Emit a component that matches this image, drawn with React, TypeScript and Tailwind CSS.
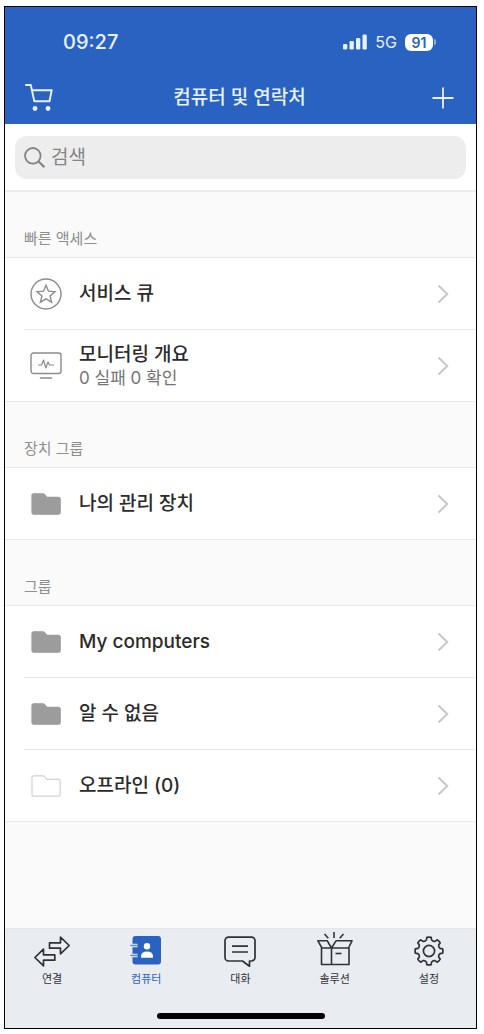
import type { ReactNode } from "react"
import clsx from "clsx"

type Row = {
    title: string
    subtitle?: string
    icon: ReactNode
}

type Section = {
    label: string
    rows: Row[]
}

type Tab = {
    label: string
    icon: ReactNode
    active?: boolean
}

function CartIcon() {
    return (
        <svg width="28" height="28" viewBox="0 0 28 28" fill="none" stroke="currentColor" strokeWidth="1.9" strokeLinecap="round" strokeLinejoin="round" aria-hidden="true">
            <path d="M1 1h4.800L9.300 17.300h15.200L26.700 6.300H6.900" />
            <circle cx="10" cy="24.500" r="2.400" fill="currentColor" stroke="none" />
            <circle cx="23" cy="24.500" r="2.400" fill="currentColor" stroke="none" />
        </svg>
    )
}

function PlusIcon() {
    return (
        <svg width="22" height="22" viewBox="0 0 22 22" fill="none" stroke="currentColor" strokeWidth="1.8" aria-hidden="true">
            <path d="M11 .5v21M.5 11h21" />
        </svg>
    )
}

function SearchIcon() {
    return (
        <svg width="21" height="21" viewBox="0 0 21 21" fill="none" stroke="currentColor" strokeWidth="1.8" aria-hidden="true">
            <circle cx="8.8" cy="8.8" r="7.8" />
            <path d="M14.3 14.3l6 5.8" strokeWidth="2.2" />
        </svg>
    )
}

function SignalIcon() {
    return (
        <svg width="24" height="16" viewBox="0 0 24 16" fill="currentColor" aria-hidden="true">
            <rect x="0" y="10" width="4.3" height="5.5" rx="1.2" />
            <rect x="6.5" y="7" width="4.3" height="8.5" rx="1.2" />
            <rect x="13" y="4" width="4.3" height="11.5" rx="1.2" />
            <rect x="19.5" y="0.5" width="4.3" height="15" rx="1.2" />
        </svg>
    )
}

function ChevronIcon() {
    return (
        <svg width="12" height="20" viewBox="0 0 12 20" fill="none" stroke="currentColor" strokeWidth="1.8" aria-hidden="true">
            <path d="M1.5 1.5L10.3 10l-8.8 8.5" />
        </svg>
    )
}

function StarIcon() {
    return (
        <svg width="32" height="32" viewBox="0 0 32 32" fill="none" stroke="#8c8c8c" strokeWidth="1.4" aria-hidden="true">
            <circle cx="16" cy="16" r="15" />
            <path d="M16 7.2l2.5 6 6.5.5-5 4.2 1.6 6.3-5.6-3.4-5.6 3.4 1.6-6.3-5-4.2 6.5-.5z" />
        </svg>
    )
}

function MonitorIcon() {
    return (
        <svg width="32" height="28" viewBox="0 0 32 28" fill="none" stroke="#8c8c8c" strokeWidth="1.4" strokeLinejoin="round" strokeLinecap="round" aria-hidden="true">
            <rect x="1" y="1" width="30" height="20.5" rx="2.5" />
            <path d="M8.5 13h3l2-5 2.3 8 2.2-6 1.5 3h4" strokeWidth="1.2" />
            <path d="M10.5 26h11" strokeWidth="1.6" />
        </svg>
    )
}

function FolderIcon({ empty = false }: { empty?: boolean }) {
    return (
        <svg width="30" height="22" viewBox="0 0 30 22" fill={empty ? "none" : "#9c9c9c"} stroke={empty ? "#d2d2d2" : "#9c9c9c"} strokeWidth="1.2" strokeLinejoin="round" aria-hidden="true">
            <path d="M1 2.5A1.6 1.6 0 0 1 2.600 .8h9.100q1.200 0 2 1l2 2.500H27.500a1.700 1.700 0 0 1 1.700 1.700V19.500a1.700 1.700 0 0 1-1.700 1.700H2.700A1.700 1.700 0 0 1 1 19.500z" />
        </svg>
    )
}

function ConnectIcon() {
    return (
        <svg width="36" height="32" viewBox="0 0 36 32" fill="none" stroke="currentColor" strokeWidth="1.7" strokeLinejoin="round" aria-hidden="true">
            <path d="M15.500 7.800H26.500V2.200L35.200 10.500L26.500 18.800V13.200H15.500z" />
            <path d="M20.800 19.800H9.500V14.200L.9 22.500L9.500 30.800V25.200H20.800z" />
        </svg>
    )
}

function ContactsIcon() {
    return (
        <svg width="32" height="32" viewBox="0 0 32 32" fill="none" aria-hidden="true">
            <rect x="2.500" y="1" width="28.500" height="28.500" rx="3" fill="currentColor" />
            <path d="M0 10.500h7.500M0 20.500h7.500" stroke="#e9edf2" strokeWidth="3.600" />
            <path d="M1 10.500h6M1 20.500h6" stroke="currentColor" strokeWidth="1.600" strokeLinecap="round" opacity=".7" />
            <circle cx="17" cy="11.200" r="3.200" fill="#fff" />
            <path d="M11 22.800v-1.500q0-4.800 6-4.800t6 4.800v1.500z" fill="#fff" />
        </svg>
    )
}

function ChatIcon() {
    return (
        <svg width="32" height="32" viewBox="0 0 32 32" fill="none" stroke="currentColor" strokeWidth="1.700" strokeLinejoin="round" aria-hidden="true">
            <path d="M4.500 2.200h23a3.500 3.500 0 0 1 3.500 3.500V22.500a3.500 3.500 0 0 1-3.500 3.500H25.500V31.200L18.500 26H4.500A3.500 3.500 0 0 1 1 22.500V5.700a3.500 3.500 0 0 1 3.500-3.500z" />
            <path d="M8 11.200h16M8 17h16" />
        </svg>
    )
}

function BoxIcon() {
    return (
        <svg width="36" height="40" viewBox="0 0 36 40" fill="none" stroke="currentColor" strokeWidth="1.600" strokeLinejoin="round" aria-hidden="true">
            <path d="M7.500 3l3.800 4.200M17 1v6M26.500 3l-3.800 4.200" />
            <path d="M.9 9.800H10.300L14.500 17H5z" />
            <path d="M19 9.800H35L31.500 17H14.500z" />
            <path d="M4.500 17V33.500H32V17M14.500 17V33.500" />
            <path d="M18.500 22.500h6" />
        </svg>
    )
}

// eight teeth with rounded notches between them
function gearPath() {
    const at = (r: number, deg: number) => {
        const a = (deg * Math.PI) / 180
        return `${(16 + r * Math.sin(a)).toFixed(2)} ${(16 - r * Math.cos(a)).toFixed(2)}`
    }
    let d = ""
    for (let k = 0; k < 8; k++) {
        const c = k * 45
        d += `${k === 0 ? "M" : "L"}${at(11.4, c - 13)}L${at(13.8, c - 9)}Q${at(14.3, c)} ${at(13.8, c + 9)}L${at(11.4, c + 13)}Q${at(10, c + 22.5)} ${at(11.4, c + 32)}`
    }
    return d + "Z"
}

function GearIcon() {
    return (
        <svg width="32" height="32" viewBox="0 0 32 32" fill="none" stroke="currentColor" strokeWidth="1.700" strokeLinejoin="round" aria-hidden="true">
            <path d={gearPath()} />
            <circle cx="16" cy="16" r="5.600" />
        </svg>
    )
}

const sections: Section[] = [
    {
        label: "빠른 액세스",
        rows: [
            { title: "서비스 큐", icon: <StarIcon /> },
            { title: "모니터링 개요", subtitle: "0 실패 0 확인", icon: <MonitorIcon /> },
        ],
    },
    {
        label: "장치 그룹",
        rows: [{ title: "나의 관리 장치", icon: <FolderIcon /> }],
    },
    {
        label: "그룹",
        rows: [
            { title: "My computers", icon: <FolderIcon /> },
            { title: "알 수 없음", icon: <FolderIcon /> },
            { title: "오프라인 (0)", icon: <FolderIcon empty /> },
        ],
    },
]

const tabs: Tab[] = [
    { label: "연결", icon: <ConnectIcon /> },
    { label: "컴퓨터", icon: <ContactsIcon />, active: true },
    { label: "대화", icon: <ChatIcon /> },
    { label: "솔루션", icon: <BoxIcon /> },
    { label: "설정", icon: <GearIcon /> },
]

function Header() {
    return (
        <header className="bg-[#2962c0] pb-[5px] text-[#e8f1ff]">
            <div className="flex h-[70px] items-center justify-between pr-10 pl-[58px]">
                <span className="text-[20px] font-medium">09:27</span>
                <div className="flex items-center gap-2">
                    <SignalIcon />
                    <span className="text-[16px]">5G</span>
                    <div className="flex items-center">
                        <span className="flex h-[17px] w-7 items-center justify-center rounded-[6px] bg-white text-[14px] font-semibold text-[#2962c0]">91</span>
                        <span className="ml-px h-[6px] w-[2px] rounded-r-full bg-[#8fb0e6]" />
                    </div>
                </div>
            </div>
            <div className="flex h-[42px] items-center justify-between pr-[22px] pl-[20px]">
                <button type="button" aria-label="장바구니" className="flex w-7">
                    <CartIcon />
                </button>
                <h1 className="text-[19px] font-medium">컴퓨터 및 연락처</h1>
                <button type="button" aria-label="추가" className="flex w-7 justify-end">
                    <PlusIcon />
                </button>
            </div>
        </header>
    )
}

function SearchBar() {
    return (
        <div className="border-b-2 border-[#ececec] bg-white px-[10px] pt-3 pb-[11px]">
            <label className="flex h-[43px] items-center gap-[6px] rounded-xl bg-[#ededed] px-[9px] text-[#858585]">
                <SearchIcon />
                <input
                    type="search"
                    aria-label="검색"
                    placeholder="검색"
                    className="min-w-0 flex-1 bg-transparent pt-[2px] text-[19px] outline-none placeholder:text-[#858585]"
                />
            </label>
        </div>
    )
}

function ListSection({ label, rows }: Section) {
    return (
        <section>
            <h2 className="flex h-[66px] items-end border-b border-[#e9e9e9] pb-2 pl-[19px] text-[15px] leading-5 text-[#8e8e8e]">{label}</h2>
            <ul className="border-b border-[#e9e9e9] bg-white pl-[19px]">
                {rows.map((row) => (
                    <li key={row.title} className="border-b border-[#e9e9e9] last:border-b-0">
                        <button type="button" className="flex h-[71px] w-full items-center pr-[27px] pl-[6px] text-left">
                            <span className="flex w-8 justify-center">{row.icon}</span>
                            <span className="ml-[17px] flex flex-1 flex-col pt-px">
                                <span className="text-[19px] leading-6 font-medium text-[#2b2b2b]">{row.title}</span>
                                {row.subtitle && <span className="text-[17px] leading-[22px] text-[#747474]">{row.subtitle}</span>}
                            </span>
                            <span className="text-[#c4c4c4]">
                                <ChevronIcon />
                            </span>
                        </button>
                    </li>
                ))}
            </ul>
        </section>
    )
}

function TabBar() {
    return (
        <nav className="border-t border-[#e3e5e8] bg-[#e9edf2] pb-[9px]">
            <div className="grid grid-cols-5">
                {tabs.map((tab) => (
                    <button
                        key={tab.label}
                        type="button"
                        aria-current={tab.active ? "page" : undefined}
                        className={clsx("flex flex-col items-center pt-[2px]", tab.active ? "text-[#2962c0]" : "text-[#303236]")}
                    >
                        <span className="flex h-10 items-center">{tab.icon}</span>
                        <span className="text-[11px] leading-4">{tab.label}</span>
                    </button>
                ))}
            </div>
            <div className="mx-auto mt-[26px] h-[6px] w-[168px] rounded-full bg-black" />
        </nav>
    )
}

export default function ContactsScreen() {
    return (
        <div className="flex min-h-screen bg-white pt-[6px] pr-[7px] pb-[5px] pl-1 font-[Inter,'Noto_Sans_CJK_KR',sans-serif]">
            <div className="flex flex-1 flex-col border border-black bg-[#fafafa]">
                <Header />
                <main className="flex-1">
                    <SearchBar />
                    {sections.map((section) => (
                        <ListSection key={section.label} {...section} />
                    ))}
                </main>
                <TabBar />
            </div>
        </div>
    )
}
